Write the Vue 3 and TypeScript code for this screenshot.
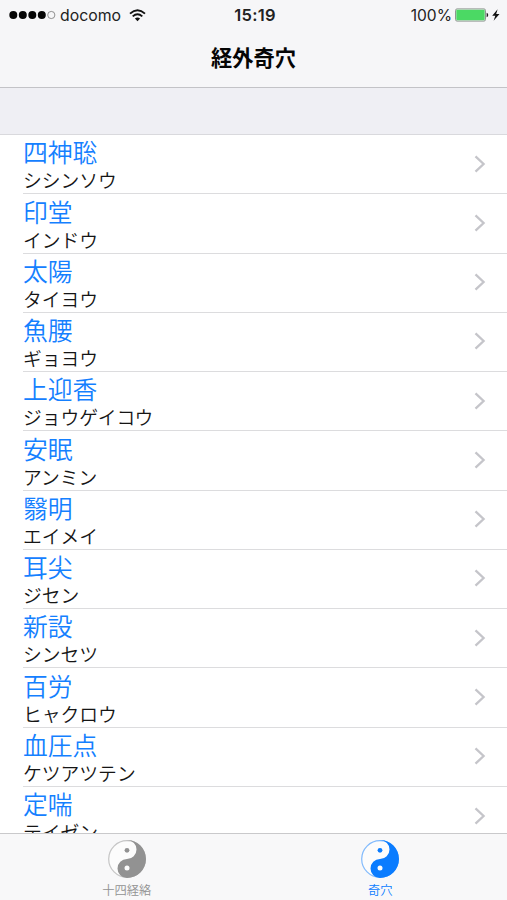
<script setup lang="ts">
interface Point {
  name: string
  reading: string
}

interface Tab {
  label: string
  active: boolean
}

const points: Point[] = [
  { name: '四神聡', reading: 'シシンソウ' },
  { name: '印堂', reading: 'インドウ' },
  { name: '太陽', reading: 'タイヨウ' },
  { name: '魚腰', reading: 'ギョヨウ' },
  { name: '上迎香', reading: 'ジョウゲイコウ' },
  { name: '安眠', reading: 'アンミン' },
  { name: '翳明', reading: 'エイメイ' },
  { name: '耳尖', reading: 'ジセン' },
  { name: '新設', reading: 'シンセツ' },
  { name: '百労', reading: 'ヒャクロウ' },
  { name: '血圧点', reading: 'ケツアツテン' },
  { name: '定喘', reading: 'テイゼン' },
]

const tabs: Tab[] = [
  { label: '十四経絡', active: false },
  { label: '奇穴', active: true },
]
</script>

<template>
  <div class="screen">
    <header class="top">
      <div class="status">
        <div class="carrier">
          <svg class="signal" width="48" height="10" viewBox="0 0 48 10">
            <circle v-for="i in 4" :key="i" :cx="4.3 + (i - 1) * 9.5" cy="5" r="4" fill="#050505" />
            <circle cx="42.3" cy="5" r="3.6" fill="none" stroke="#777" stroke-width="0.8" />
          </svg>
          <span class="operator">docomo</span>
          <svg class="wifi" width="17" height="13" viewBox="0 0 17 13">
            <g fill="none" stroke="#111" stroke-width="1.9">
              <path d="M1 4.6 Q8.5 -2 16 4.6" />
              <path d="M3.7 7.4 Q8.5 3.2 13.3 7.4" />
            </g>
            <path d="M5.9 9.5 Q8.5 7.3 11.1 9.5 L8.5 12.2 Z" fill="#111" />
          </svg>
        </div>
        <span class="time">15:19</span>
        <div class="power">
          <span class="percent">100%</span>
          <svg class="battery" width="46" height="14" viewBox="0 0 46 14">
            <rect x="0.5" y="0.9" width="30" height="12.2" rx="1.6" fill="#f6f6f8" stroke="#858b87" stroke-width="0.9" />
            <rect x="1.3" y="1.7" width="28.4" height="10.6" rx="0.8" fill="#4bd964" />
            <path d="M31.6 4.8 A2.3 2.3 0 0 1 31.6 9.2 Z" fill="#222" />
            <path d="M42.6 1.2 L37.2 7.8 L40.3 7.8 L38.6 12.8 L44.5 6 L41.2 6 Z" fill="#111" />
          </svg>
        </div>
      </div>
      <h1 class="title">経外奇穴</h1>
    </header>
    <div class="section"></div>
    <main class="list">
      <div v-for="point in points" :key="point.name" class="row">
        <div class="texts">
          <div class="name">{{ point.name }}</div>
          <div class="reading">{{ point.reading }}</div>
        </div>
        <svg class="chevron" width="12" height="18" viewBox="0 0 12 18">
          <path d="M1.5 1.3 L9.6 9 L1.5 16.7" fill="none" stroke="#c5c5ca" stroke-width="2.3" />
        </svg>
      </div>
    </main>
    <nav class="tabs">
      <div v-for="tab in tabs" :key="tab.label" class="tab" :class="{ active: tab.active }">
        <svg class="taiji" width="38" height="38" viewBox="0 0 38 38">
          <circle cx="19" cy="19" r="18.3" fill="#fcfcfc" stroke="currentColor" stroke-opacity="0.5" stroke-width="1.2" />
          <path d="M19 0 A19 19 0 0 1 19 38 A9.5 9.5 0 0 1 19 19 A9.5 9.5 0 0 0 19 0 Z" fill="currentColor" />
          <circle cx="19" cy="10.3" r="2.4" fill="currentColor" />
          <circle cx="19" cy="27.9" r="2.5" fill="#fcfcfc" />
        </svg>
        <span class="label">{{ tab.label }}</span>
      </div>
    </nav>
  </div>
</template>

<style>
body {
  background: #fff;
}
</style>

<style scoped>
.screen {
  display: flex;
  flex-direction: column;
  width: 507px;
  height: 900px;
  overflow: hidden;
  background: #fff;
  font-family: Inter, 'Noto Sans CJK JP', sans-serif;
}
.top {
  box-sizing: border-box;
  flex: none;
  height: 88px;
  background: #f6f6f8;
  border-bottom: 1px solid #c3c3c7;
}
.status {
  display: grid;
  grid-template-columns: 1fr auto 1fr;
  align-items: center;
  height: 30px;
  padding: 0 6px 0 9px;
  color: #222;
  font-size: 15.8px;
  line-height: 30px;
}
.carrier,
.power {
  display: flex;
  align-items: center;
  height: 30px;
}
.operator {
  width: 62px;
  margin-left: 3px;
  line-height: 28px;
  padding-top: 2px;
}
.wifi {
  margin-left: 7px;
}
.time {
  font-weight: 600;
  font-size: 16.5px;
  letter-spacing: 0.3px;
}
.power {
  justify-content: flex-end;
}
.percent {
  padding-top: 2px;
  font-size: 15.6px;
  line-height: 28px;
}
.battery {
  margin-left: 3px;
}
.title {
  margin: 0;
  color: #050505;
  font-size: 21.2px;
  font-weight: 700;
  line-height: 56px;
  text-align: center;
}
.section {
  box-sizing: border-box;
  flex: none;
  height: 47px;
  background: #efeff4;
  border-bottom: 1px solid #d9d9dd;
}
.list {
  flex: 1;
  min-height: 0;
  overflow: hidden;
}
.row {
  box-sizing: border-box;
  display: flex;
  align-items: center;
  justify-content: space-between;
  height: 59.27px;
  margin-left: 23px;
  padding-right: 21px;
  border-bottom: 1px solid #dcdcde;
}
.texts {
  padding-top: 1.4px;
}
.name {
  height: 34px;
  color: #1480ff;
  font-size: 24.8px;
  font-weight: 350;
  line-height: 35px;
}
.reading {
  height: 23px;
  color: #151515;
  font-size: 18.8px;
  font-weight: 350;
  line-height: 23px;
}
.chevron {
  margin-bottom: 1px;
}
.tabs {
  box-sizing: border-box;
  display: flex;
  flex: none;
  height: 67px;
  background: #f8f8f9;
  border-top: 1px solid #c9c9cb;
}
.tab {
  display: flex;
  flex: 1;
  flex-direction: column;
  align-items: center;
  padding-top: 6px;
  color: #929292;
}
.tab.active {
  color: #0a7cff;
}
.label {
  margin-top: 5px;
  font-size: 12.3px;
  font-weight: 350;
  line-height: 16px;
}
</style>
